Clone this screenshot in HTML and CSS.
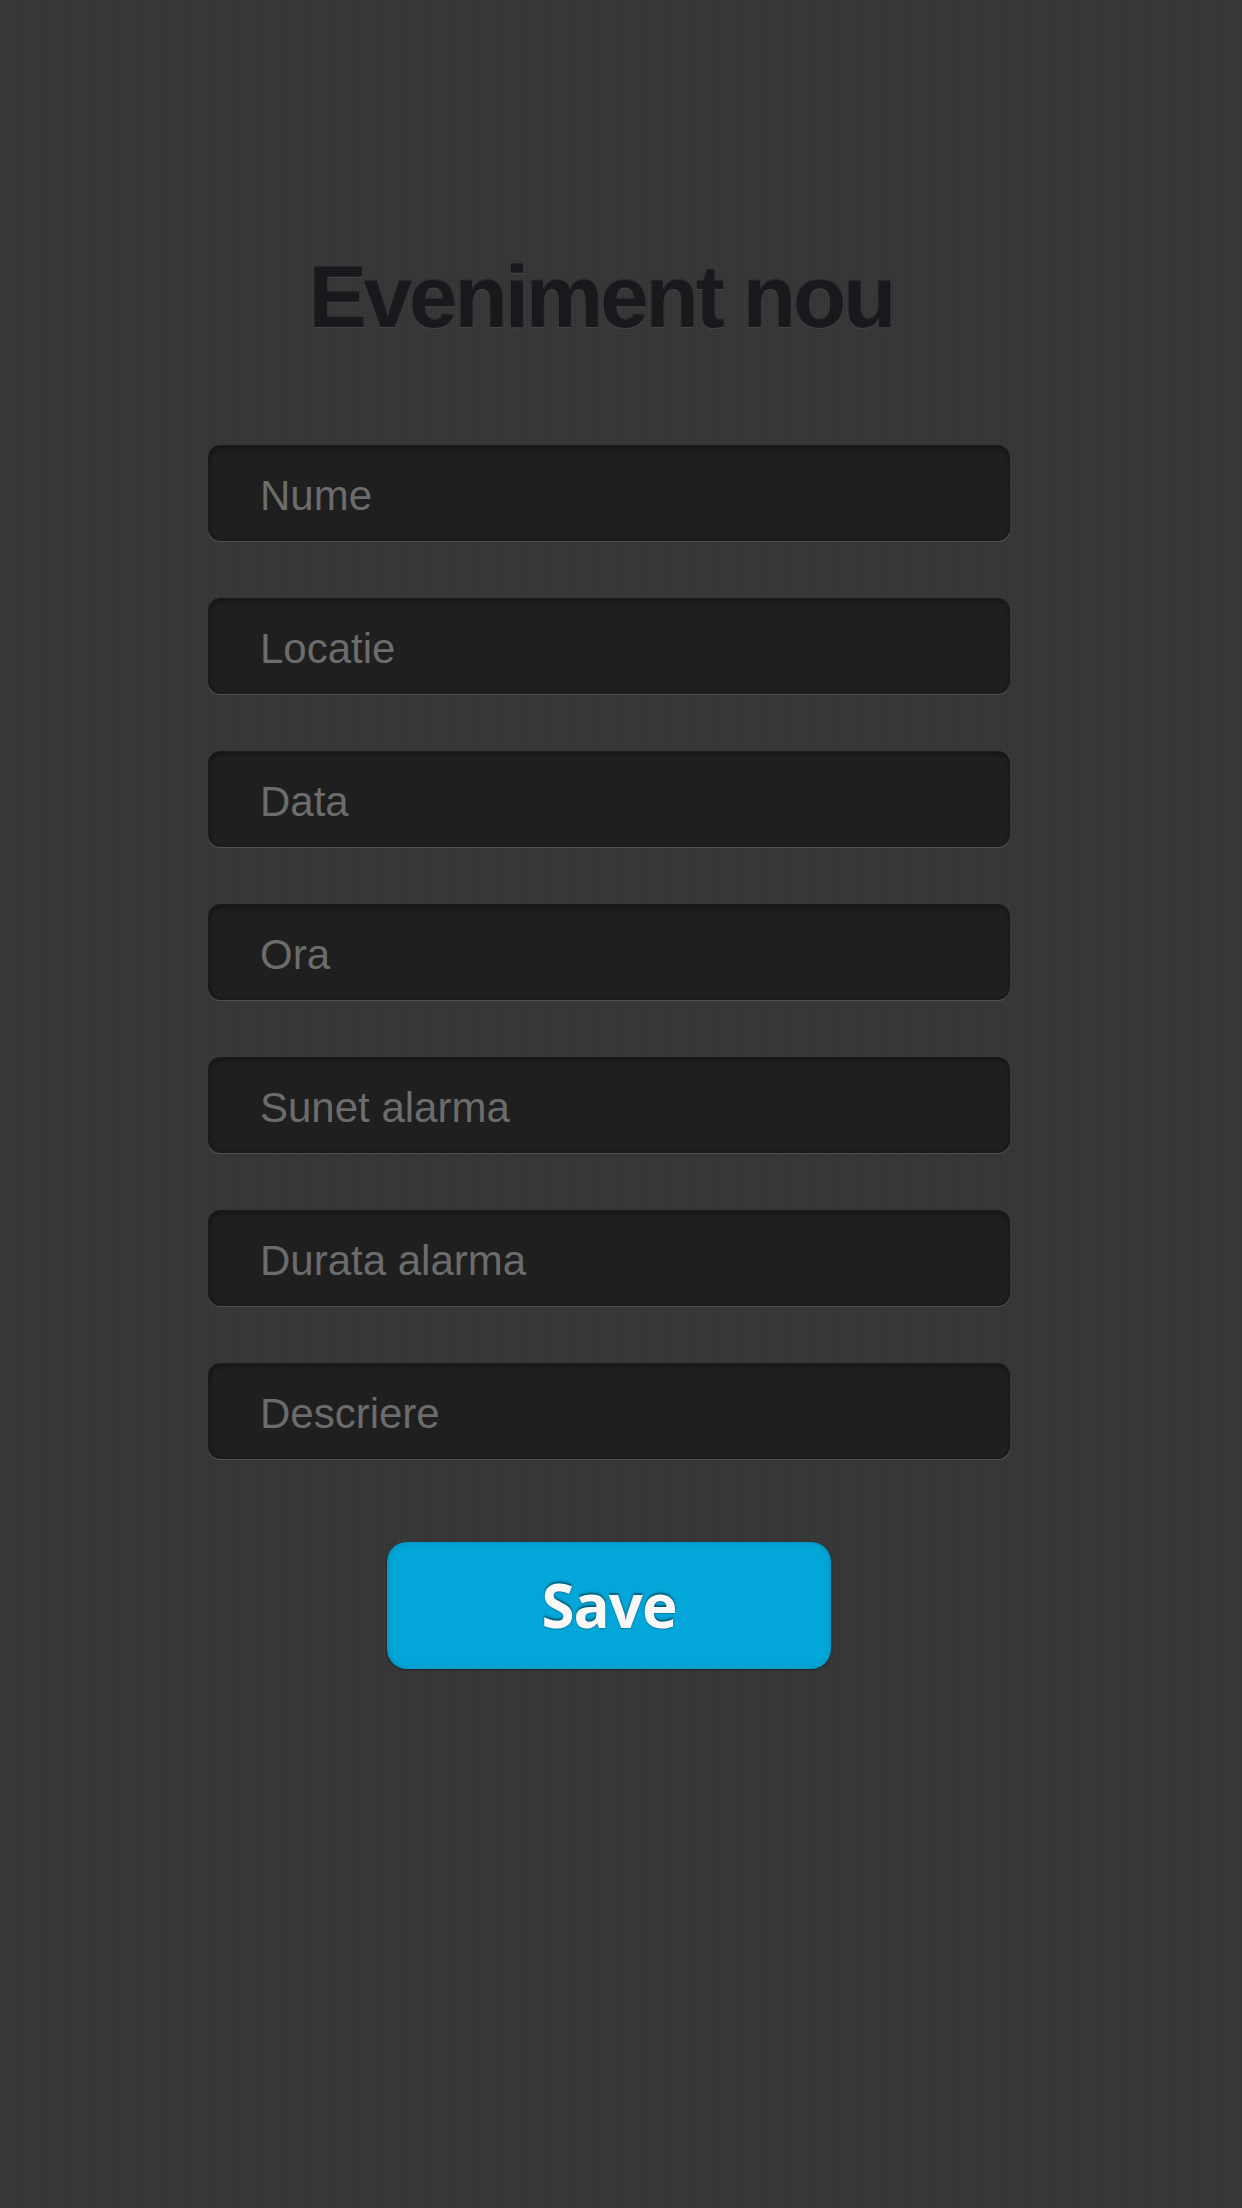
FILE: index.html
```html
<!DOCTYPE html>
<html lang="ro">
<head>
<meta charset="utf-8">
<title>Eveniment nou</title>
<link rel="stylesheet" href="styles.css">
</head>
<body>
<main class="page">
  <h1 class="title">Eveniment nou</h1>
  <form class="form">
    <div class="field"><span class="placeholder">Nume</span></div>
    <div class="field"><span class="placeholder">Locatie</span></div>
    <div class="field"><span class="placeholder">Data</span></div>
    <div class="field"><span class="placeholder">Ora</span></div>
    <div class="field"><span class="placeholder">Sunet alarma</span></div>
    <div class="field"><span class="placeholder">Durata alarma</span></div>
    <div class="field"><span class="placeholder">Descriere</span></div>
    <button type="button" class="save">Save</button>
  </form>
</main>
</body>
</html>
```

FILE: styles.css
```css
html, body {
  margin: 0;
  padding: 0;
}
body {
  width: 1242px;
  height: 2208px;
  overflow: hidden;
  background-color: #363636;
  background-image:
    repeating-linear-gradient(0deg, rgba(0,0,0,0.035) 0 1px, transparent 1px 3px),
    repeating-linear-gradient(90deg, rgba(255,255,255,0.02) 0 1px, transparent 1px 3px);
  font-family: "Liberation Sans", Arial, sans-serif;
}
.page {
  width: 802px;
  margin-left: 208px;
  padding-top: 247px;
  display: flex;
  flex-direction: column;
  align-items: center;
}
.title {
  margin: 0;
  padding-right: 16px;
  font-size: 87px;
  line-height: 100px;
  font-weight: bold;
  letter-spacing: -3px;
  color: #17191d;
  text-shadow: 0 1px 1px rgba(255,255,255,0.08), 0 -1px 1px rgba(0,0,0,0.3);
}
.form {
  margin-top: 98px;
  width: 100%;
  display: flex;
  flex-direction: column;
  align-items: center;
  gap: 57px;
}
.field {
  box-sizing: border-box;
  width: 802px;
  height: 96px;
  border-radius: 12px;
  background: #1f1f1f;
  border: 1px solid #1a1a1a;
  box-shadow: inset 0 3px 4px rgba(0,0,0,0.25), inset 2px 0 3px rgba(0,0,0,0.15), 0 1px 0 rgba(255,255,255,0.13);
  display: flex;
  align-items: center;
  padding-left: 51px;
}
.placeholder {
  font-size: 42px;
  color: #6c6c6c;
  padding-top: 6px;
}
.save {
  margin-top: 26px;
  width: 444px;
  height: 127px;
  border: none;
  border-radius: 20px;
  background: #03a6d8;
  box-shadow: inset 0 0 6px rgba(0,60,90,0.25), 0 1px 2px rgba(0,0,0,0.4);
  font-family: "Open Sans", sans-serif;
  font-weight: bold;
  font-size: 60px;
  letter-spacing: -1px;
  color: #f8f8f8;
  text-shadow: 0 -2px 2px rgba(0,0,0,0.45), 0 1px 1px rgba(0,0,0,0.25);
  padding: 0;
  padding-bottom: 2px;
}
```
